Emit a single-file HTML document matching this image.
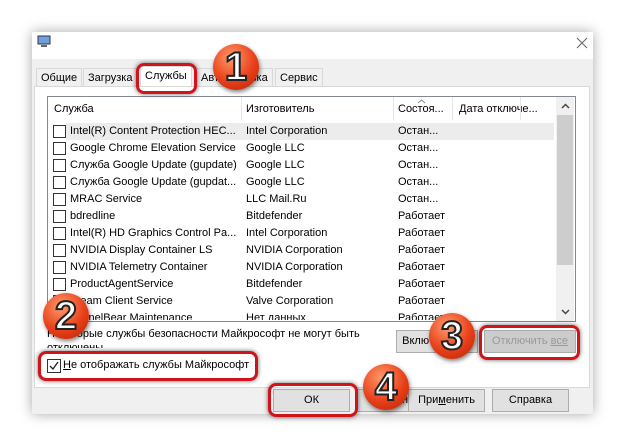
<!DOCTYPE html><html><head><style>
body{margin:0;width:626px;height:447px;background:#fff;position:relative;overflow:hidden;font-family:"Liberation Sans",sans-serif;font-size:11px;color:#000}
.a{position:absolute}
.win{left:32px;top:32px;width:561px;height:382px;background:#f0f0f0;box-shadow:0 0 12px rgba(0,0,0,.35);}
.row{position:absolute;left:48px;width:506px;height:17px;line-height:17px}
.row span{position:absolute;white-space:nowrap}
.cb{position:absolute;left:5px;top:2px;width:11px;height:11px;border:1px solid #333;background:#fff}
.btn{position:absolute;height:21px;border:1px solid #adadad;background:#e1e1e1;text-align:center;line-height:21px}
.hl{position:absolute;border:3px solid #d0141a;border-radius:8px;box-shadow:0 0 5px rgba(0,0,0,.6)}
.circ{position:absolute;width:46px;height:46px;border-radius:50%;background:radial-gradient(circle at 40% 30%,#ff9a6a,#e8401a 55%,#b52000);box-shadow:1px 2px 4px rgba(0,0,0,.5);color:#fff;font:bold 40px/46px "Liberation Sans",sans-serif;text-align:center;-webkit-text-stroke:2px #222}
.tab{position:absolute;top:68px;height:18px;line-height:18px;border:1px solid #d9d9d9;border-bottom:none;padding:0 4px;background:#f0f0f0}
</style></head><body>
<div class="a win"></div>
<div class="a" style="left:32px;top:32px;width:561px;height:27px;background:#fff"></div>
<svg class="a" style="left:37px;top:35px" width="14" height="13"><rect x="1" y="1" width="12" height="8" fill="#6f9fdc" stroke="#334"/><rect x="4" y="10" width="6" height="2" fill="#667"/></svg>
<svg class="a" style="left:576px;top:37px" width="12" height="12"><path d="M1 1L11 11M11 1L1 11" stroke="#666" stroke-width="1"/></svg>
<div class="tab" style="left:36px">Общие</div>
<div class="tab" style="left:83px">Загрузка</div>
<div class="tab" style="left:140px;top:66px;height:20px;background:#fff">Службы</div>
<div class="tab" style="left:196px">Автозагрузка</div>
<div class="tab" style="left:275px">Сервис</div>
<div class="a" style="left:34px;top:86px;width:554px;height:300px;background:#fff;border:1px solid #d9d9d9"></div>
<div class="a" style="left:47px;top:96px;width:527px;height:224px;border:1px solid #828790;background:#fff;overflow:hidden">
<div class="a" style="left:0;top:0;width:508px;height:23px;line-height:25px">
<span class="a" style="left:6px">Служба</span><span class="a" style="left:198px">Изготовитель</span><span class="a" style="left:350px">Состоя...</span><span class="a" style="left:411px">Дата отключе...</span>
<div class="a" style="left:193px;top:0;width:1px;height:23px;background:#e5e5e5"></div><div class="a" style="left:345px;top:0;width:1px;height:23px;background:#e5e5e5"></div><div class="a" style="left:404px;top:0;width:1px;height:23px;background:#e5e5e5"></div><div class="a" style="left:472px;top:0;width:1px;height:23px;background:#e5e5e5"></div>
<svg class="a" style="left:369px;top:2px" width="9" height="5"><path d="M1 4L4.5 1L8 4" stroke="#888" fill="none"/></svg></div>
<div class="a" style="left:508px;top:0;width:18px;height:224px;background:#f0f0f0"></div>
<div class="a" style="left:509px;top:18px;width:16px;height:150px;background:#cdcdcd"></div>
<svg class="a" style="left:513px;top:6px" width="9" height="6"><path d="M1 5L4.5 1.5L8 5" stroke="#444" stroke-width="1.5" fill="none"/></svg>
<svg class="a" style="left:513px;top:212px" width="9" height="6"><path d="M1 1L4.5 4.5L8 1" stroke="#444" stroke-width="1.5" fill="none"/></svg>
</div>
<div class="a" style="left:66px;top:123px;width:488px;height:17px;background:#ececec"></div>
<div class="row" style="top:123px"><div class="cb"></div><span style="left:22px">Intel(R) Content Protection HEC...</span><span style="left:198px">Intel Corporation</span><span style="left:350px">Остан...</span></div>
<div class="row" style="top:140px"><div class="cb"></div><span style="left:22px">Google Chrome Elevation Service</span><span style="left:198px">Google LLC</span><span style="left:350px">Остан...</span></div>
<div class="row" style="top:157px"><div class="cb"></div><span style="left:22px">Служба Google Update (gupdate)</span><span style="left:198px">Google LLC</span><span style="left:350px">Остан...</span></div>
<div class="row" style="top:174px"><div class="cb"></div><span style="left:22px">Служба Google Update (gupdat...</span><span style="left:198px">Google LLC</span><span style="left:350px">Остан...</span></div>
<div class="row" style="top:191px"><div class="cb"></div><span style="left:22px">MRAC Service</span><span style="left:198px">LLC Mail.Ru</span><span style="left:350px">Остан...</span></div>
<div class="row" style="top:208px"><div class="cb"></div><span style="left:22px">bdredline</span><span style="left:198px">Bitdefender</span><span style="left:350px">Работает</span></div>
<div class="row" style="top:225px"><div class="cb"></div><span style="left:22px">Intel(R) HD Graphics Control Pa...</span><span style="left:198px">Intel Corporation</span><span style="left:350px">Работает</span></div>
<div class="row" style="top:242px"><div class="cb"></div><span style="left:22px">NVIDIA Display Container LS</span><span style="left:198px">NVIDIA Corporation</span><span style="left:350px">Работает</span></div>
<div class="row" style="top:259px"><div class="cb"></div><span style="left:22px">NVIDIA Telemetry Container</span><span style="left:198px">NVIDIA Corporation</span><span style="left:350px">Работает</span></div>
<div class="row" style="top:276px"><div class="cb"></div><span style="left:22px">ProductAgentService</span><span style="left:198px">Bitdefender</span><span style="left:350px">Работает</span></div>
<div class="row" style="top:293px"><div class="cb"></div><span style="left:22px">Steam Client Service</span><span style="left:198px">Valve Corporation</span><span style="left:350px">Работает</span></div>
<div class="row" style="top:310px;height:10px;overflow:hidden"><div class="cb"></div><span style="left:22px">TunnelBear Maintenance</span><span style="left:198px">Нет данных</span><span style="left:350px">Работает</span></div>
<div class="a" style="left:47px;top:328px;white-space:nowrap">Некоторые службы безопасности Майкрософт не могут быть</div>
<div class="a" style="left:47px;top:342px;height:6px;overflow:hidden;white-space:nowrap">отключены.</div>
<div class="btn" style="left:396px;top:330px;width:80px">Включить все</div>
<div class="btn" style="left:484px;top:330px;width:90px;color:#999;background:#ccc">Отключить <u>все</u></div>
<div class="a" style="left:47px;top:359px;width:12px;height:12px;border:1px solid #333;background:#fff"><svg width="12" height="12" style="display:block"><path d="M2 6L5 9L10 2" stroke="#222" stroke-width="1.3" fill="none"/></svg></div>
<div class="a" style="left:63px;top:359px"><u>Н</u>е отображать службы Майкрософт</div>
<div class="btn" style="left:273px;top:389px;width:75px">ОК</div>
<div class="btn" style="left:356px;top:389px;width:75px">Отмена</div>
<div class="btn" style="left:408px;top:389px;width:75px">При<u>м</u>енить</div>
<div class="btn" style="left:492px;top:389px;width:75px">Справка</div>
<div class="hl" style="left:136px;top:63px;width:55px;height:25px"></div>
<div class="hl" style="left:38px;top:351px;width:214px;height:24px"></div>
<div class="hl" style="left:479px;top:325px;width:95px;height:29px"></div>
<div class="hl" style="left:268px;top:383px;width:84px;height:28px"></div>
<div class="circ" style="left:213px;top:44px">1</div>
<div class="circ" style="left:43px;top:293px">2</div>
<div class="circ" style="left:429px;top:313px">3</div>
<div class="circ" style="left:363px;top:364px">4</div>
</body></html>
